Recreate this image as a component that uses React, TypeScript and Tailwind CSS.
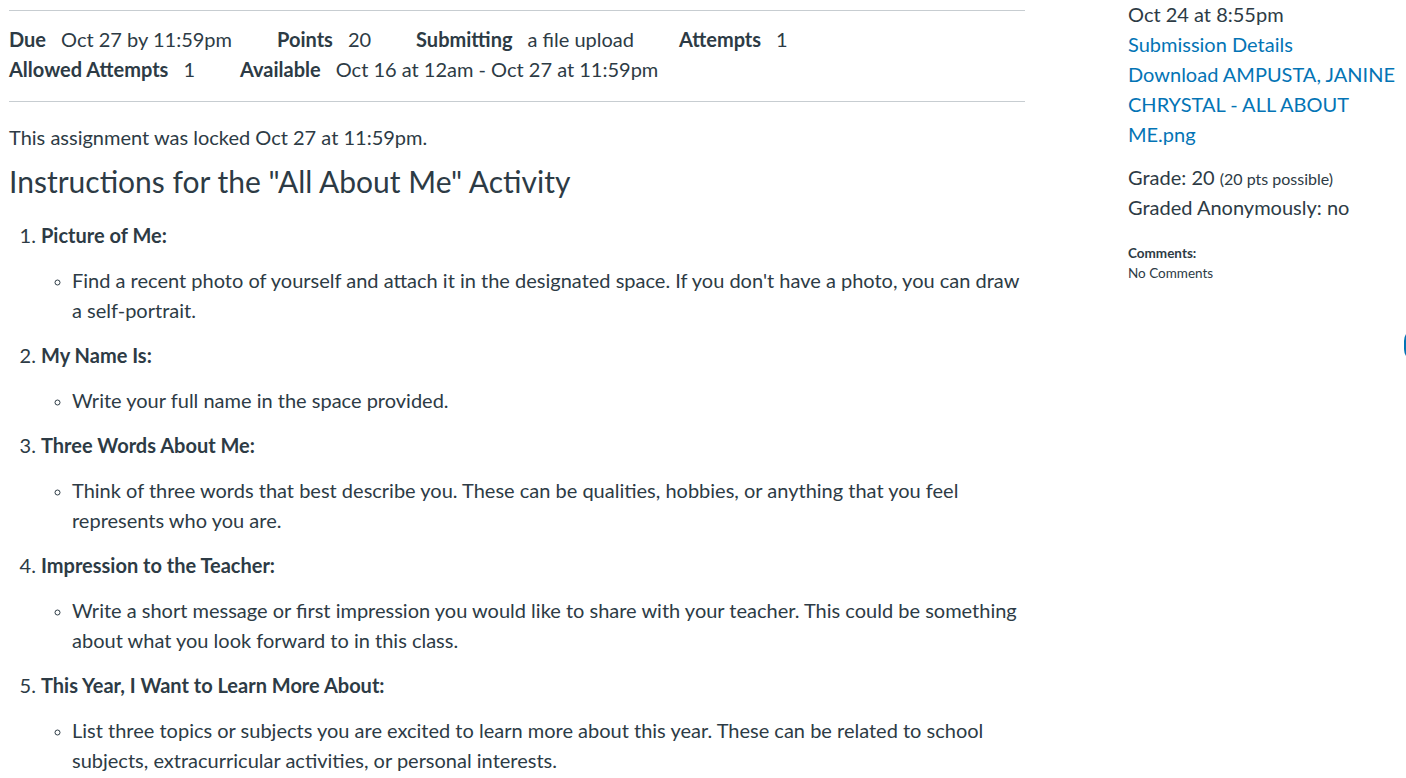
import React from 'react';

const items = [
  {
    title: 'Picture of Me:',
    text: "Find a recent photo of yourself and attach it in the designated space. If you don't have a photo, you can draw a self-portrait.",
  },
  { title: 'My Name Is:', text: 'Write your full name in the space provided.' },
  {
    title: 'Three Words About Me:',
    text: 'Think of three words that best describe you. These can be qualities, hobbies, or anything that you feel represents who you are.',
  },
  {
    title: 'Impression to the Teacher:',
    text: 'Write a short message or first impression you would like to share with your teacher. This could be something about what you look forward to in this class.',
  },
  {
    title: 'This Year, I Want to Learn More About:',
    text: 'List three topics or subjects you are excited to learn more about this year. These can be related to school subjects, extracurricular activities, or personal interests.',
  },
];

const Detail: React.FC<{ label: string; value: string }> = ({ label, value }) => (
  <span className="mr-[45px]">
    <span className="font-bold mr-[15px]">{label}</span>
    {value}
  </span>
);

export default function App() {
  return (
    <div
      className="relative flex min-h-screen bg-white text-[#2d3b45] text-[20px] leading-[30px] overflow-hidden"
      style={{ fontFamily: 'Lato, "Open Sans", sans-serif' }}
    >
      {/* main content */}
      <div className="ml-[9px] w-[1016px] pt-[10px]">
        <div className="border-y border-[#c7cdd1] pt-[13px] pb-[17px]">
          <div className="flex">
            <Detail label="Due" value="Oct 27 by 11:59pm" />
            <Detail label="Points" value="20" />
            <Detail label="Submitting" value="a file upload" />
            <Detail label="Attempts" value="1" />
          </div>
          <div className="flex">
            <Detail label="Allowed Attempts" value="1" />
            <Detail label="Available" value="Oct 16 at 12am - Oct 27 at 11:59pm" />
          </div>
        </div>

        <p className="mt-[20px]">This assignment was locked Oct 27 at 11:59pm.</p>
        <h2 className="text-[30px] leading-[36px] mt-[11px]">
          Instructions for the "All About Me" Activity
        </h2>

        <ol className="list-decimal pl-[32px] mt-[21px]">
          {items.map((it) => (
            <li key={it.title}>
              <strong>{it.title}</strong>
              <ul className="list-[circle] pl-[31px] my-[15px] marker:text-[15px]">
                <li>{it.text}</li>
              </ul>
            </li>
          ))}
        </ol>
      </div>

      {/* sidebar */}
      <div className="ml-[103px] w-[272px] -mt-px">
        <div>Oct 24 at 8:55pm</div>
        <a href="#" className="block text-[#0374b5]">
          Submission Details
        </a>
        <a href="#" className="block text-[#0374b5]">
          Download AMPUSTA, JANINE CHRYSTAL - ALL ABOUT ME.png
        </a>
        <div className="mt-[13px]">
          Grade: 20 <span className="text-[16px] leading-none">(20 pts possible)</span>
        </div>
        <div>Graded Anonymously: no</div>
        <div className="mt-[21px] text-[13.5px] leading-[20px]">
          <div className="font-bold">Comments:</div>
          <div>No Comments</div>
        </div>
      </div>

      <div className="absolute right-[-24px] top-[328px] w-[26px] h-[34px] rounded-full border-l-[3px] border-[#0374b5]" />
    </div>
  );
}
